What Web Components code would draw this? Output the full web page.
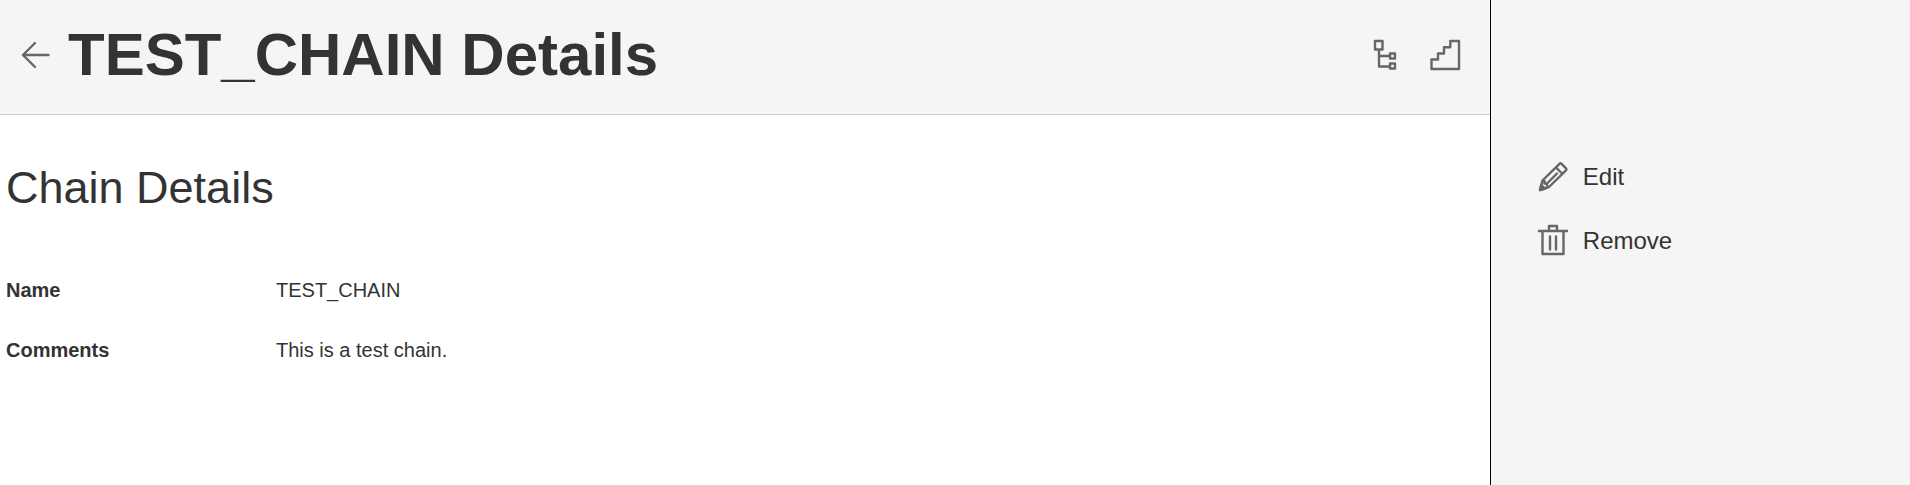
<!DOCTYPE html>
<html lang="en">
<head>
<meta charset="utf-8">
<title>TEST_CHAIN Details</title>
<style>
    html, body {
        height: 100%;
        margin: 0;
    }
    body {
        font-family: Arial, "Liberation Sans", sans-serif;
        color: #333;
        background: #fff;
    }
</style>
</head>
<body>
<chain-page>
    <page-header slot="header" heading="TEST_CHAIN Details">
        <icon-button icon="tree" label="Show in tree"></icon-button>
        <icon-button icon="steps" label="Chain steps"></icon-button>
    </page-header>
    <detail-section heading="Chain Details">
        <detail-row label="Name">TEST_CHAIN</detail-row>
        <detail-row label="Comments">This is a test chain.</detail-row>
    </detail-section>
    <action-item slot="actions" icon="edit">Edit</action-item>
    <action-item slot="actions" icon="remove">Remove</action-item>
</chain-page>

<script>
(function() {
    // All icons are drawn on a 32x34 grid
    const icons = {
        back: `<path d="M28.500 17H3M15 5L3 17l12 12"/>`,
        tree: `<path d="M5 3h7.500v8.500H5zM9 11.500v17h11M9 18h11M20 15.500h5v5h-5zM20 25.500h5v5h-5z"/>`,
        steps: `<path d="M1.500 31V21.500H8v-6h6V9.300h6.300V3h8.700v28z"/>`,
        edit: `<path d="M3 30l2.500-9.500L22.500 3.800q1-1 2 0l4.500 4.500q1 1 0 2L12 27zM19 7.500l6.500 6.500M10 23.500L20 13.500M7.500 21v2.500l2.500 0v2.500"/><path d="M3 30l1.200-5 3.800 3.700z" fill="#666"/>`,
        remove: `<path d="M2 7h28M5.500 7v23h21V7M12 7V2h8v5M13 12.500v13M19 12.500v13"/>`
    };

    function drawIcon(name) {
        return `<svg viewBox="0 0 32 34" width="32" height="34" aria-hidden="true">${icons[name] || ""}</svg>`;
    }

    const iconStyle = `
        svg {
            display: block;
            flex: none;
            fill: none;
            stroke: #666;
            stroke-width: 2.4;
            stroke-linecap: round;
            stroke-linejoin: round;
        }
    `;

    class ChainPage extends HTMLElement {
        constructor() {
            super();
            this.attachShadow({mode: "open"}).innerHTML = `
                <style>
                    :host {
                        display: grid;
                        grid-template-columns: 78% 1fr;
                        min-height: 100%;
                    }
                    aside {
                        display: flex;
                        flex-direction: column;
                        gap: 24px;
                        box-sizing: border-box;
                        padding: 157px 46px 24px;
                        border-left: 1px solid #000;
                        background: #f5f5f5;
                    }
                </style>
                <main>
                    <slot name="header"></slot>
                    <slot></slot>
                </main>
                <aside><slot name="actions"></slot></aside>
            `;
        }
    }

    class PageHeader extends HTMLElement {
        connectedCallback() {
            if (this.shadowRoot) return;
            this.attachShadow({mode: "open"}).innerHTML = `
                <style>
                    :host {
                        display: flex;
                        align-items: center;
                        justify-content: space-between;
                        padding: 20px 28px 24px 20px;
                        border-bottom: 1px solid #ccc;
                        background: #f5f5f5;
                    }
                    .title, nav {
                        display: flex;
                        align-items: center;
                    }
                    .title {
                        gap: 16px;
                    }
                    nav {
                        gap: 28px;
                    }
                    h1 {
                        margin: 0;
                        font-size: 60px;
                        line-height: 70px;
                    }
                </style>
                <div class="title">
                    <icon-button icon="back" label="Back"></icon-button>
                    <h1></h1>
                </div>
                <nav><slot></slot></nav>
            `;
            this.shadowRoot.querySelector("h1").textContent = this.getAttribute("heading");
        }
    }

    class IconButton extends HTMLElement {
        connectedCallback() {
            if (this.shadowRoot) return;
            this.attachShadow({mode: "open"}).innerHTML = `
                <style>
                    :host {
                        display: block;
                    }
                    button {
                        display: block;
                        padding: 0;
                        border: 0;
                        background: none;
                        cursor: pointer;
                    }
                    ${iconStyle}
                </style>
                <button type="button">${drawIcon(this.getAttribute("icon"))}</button>
            `;
            this.shadowRoot.querySelector("button").setAttribute("aria-label", this.getAttribute("label"));
        }
    }

    class DetailSection extends HTMLElement {
        connectedCallback() {
            if (this.shadowRoot) return;
            this.attachShadow({mode: "open"}).innerHTML = `
                <style>
                    :host {
                        display: block;
                        padding: 47px 6px 24px;
                    }
                    h2 {
                        margin: 0 0 62px;
                        font-size: 45px;
                        font-weight: normal;
                        line-height: 52px;
                    }
                    .rows {
                        display: flex;
                        flex-direction: column;
                        gap: 32px;
                    }
                </style>
                <h2></h2>
                <div class="rows"><slot></slot></div>
            `;
            this.shadowRoot.querySelector("h2").textContent = this.getAttribute("heading");
        }
    }

    class DetailRow extends HTMLElement {
        connectedCallback() {
            if (this.shadowRoot) return;
            this.attachShadow({mode: "open"}).innerHTML = `
                <style>
                    :host {
                        display: grid;
                        grid-template-columns: 270px 1fr;
                        font-size: 20px;
                        line-height: 28px;
                    }
                    .label {
                        font-weight: bold;
                    }
                </style>
                <span class="label"></span>
                <span><slot></slot></span>
            `;
            this.shadowRoot.querySelector(".label").textContent = this.getAttribute("label");
        }
    }

    class ActionItem extends HTMLElement {
        connectedCallback() {
            if (this.shadowRoot) return;
            this.attachShadow({mode: "open"}).innerHTML = `
                <style>
                    :host {
                        display: block;
                    }
                    button {
                        display: flex;
                        align-items: center;
                        gap: 14px;
                        padding: 0;
                        border: 0;
                        background: none;
                        color: inherit;
                        font: inherit;
                        font-size: 24px;
                        line-height: 40px;
                        cursor: pointer;
                    }
                    ${iconStyle}
                </style>
                <button type="button">${drawIcon(this.getAttribute("icon"))}<span><slot></slot></span></button>
            `;
        }
    }

    customElements.define("chain-page", ChainPage);
    customElements.define("page-header", PageHeader);
    customElements.define("icon-button", IconButton);
    customElements.define("detail-section", DetailSection);
    customElements.define("detail-row", DetailRow);
    customElements.define("action-item", ActionItem);
})();
</script>
</body>
</html>
